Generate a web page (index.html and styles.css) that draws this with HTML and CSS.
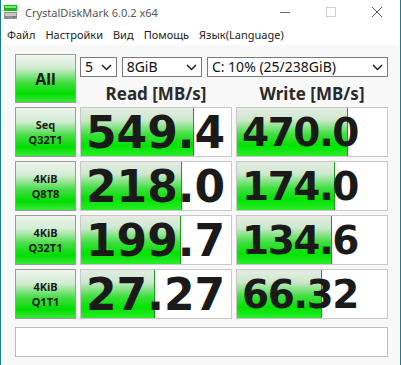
FILE: index.html
```html
<!DOCTYPE html>
<html lang="ru">
<head>
    <meta charset="UTF-8">
    <meta name="viewport" content="width=device-width, initial-scale=1.0">
    <title>CrystalDiskMark 6.0.2 x64</title>
    <link rel="stylesheet" href="styles.css">
</head>
<body>
<div class="window">
    <!-- Title bar -->
    <div class="titlebar">
        <svg class="app-icon" width="16" height="16" viewBox="0 0 16 16">
            <rect x="1" y="1" width="13" height="6" fill="#18b818"/>
            <rect x="2" y="2" width="11" height="2" fill="#7de87d"/>
            <rect x="1" y="8" width="13" height="7" fill="#8e8e8e"/>
            <rect x="2" y="9" width="11" height="3" fill="#c9c9c9"/>
            <rect x="10" y="12" width="2" height="1" fill="#2a8a2a"/>
        </svg>
        <span class="title">CrystalDiskMark 6.0.2 x64</span>
        <div class="controls">
            <span class="ctl"><svg width="10" height="10" viewBox="0 0 10 10"><path d="M0 5.5H10" stroke="#6a6a6a" stroke-width="1"/></svg></span>
            <span class="ctl"><svg width="10" height="10" viewBox="0 0 10 10"><rect x="0.5" y="0.5" width="9" height="9" fill="none" stroke="#cfcfcf"/></svg></span>
            <span class="ctl"><svg width="10" height="10" viewBox="0 0 10 10"><path d="M0 0L10 10M10 0L0 10" stroke="#555" stroke-width="1"/></svg></span>
        </div>
    </div>

    <!-- Menu -->
    <div class="menubar">
        <span>Файл</span>
        <span>Настройки</span>
        <span>Вид</span>
        <span>Помощь</span>
        <span>Язык(Language)</span>
    </div>

    <div class="client">
        <div class="board">
            <button class="btn all">All</button>

            <div class="top">
                <div class="selects">
                    <div class="select s-count">5<svg class="chev" width="11" height="7" viewBox="0 0 11 7"><path d="M1 1L5.5 5.5L10 1" fill="none" stroke="#222" stroke-width="1.5"/></svg></div>
                    <div class="select s-size">8GiB<svg class="chev" width="11" height="7" viewBox="0 0 11 7"><path d="M1 1L5.5 5.5L10 1" fill="none" stroke="#222" stroke-width="1.5"/></svg></div>
                    <div class="select s-drive">C: 10% (25/238GiB)<svg class="chev" width="11" height="7" viewBox="0 0 11 7"><path d="M1 1L5.5 5.5L10 1" fill="none" stroke="#222" stroke-width="1.5"/></svg></div>
                </div>
                <div class="heads">
                    <div class="head">Read [MB/s]</div>
                    <div class="head">Write [MB/s]</div>
                </div>
            </div>

            <button class="btn label">Seq<br>Q32T1</button>
            <div class="cell read"><span class="fill" style="width: 112px"></span><span class="val">549.4</span></div>
            <div class="cell write"><span class="fill" style="width: 110px"></span><span class="val">470.0</span></div>

            <button class="btn label">4KiB<br>Q8T8</button>
            <div class="cell read"><span class="fill" style="width: 100px"></span><span class="val">218.0</span></div>
            <div class="cell write"><span class="fill" style="width: 97px"></span><span class="val">174.0</span></div>

            <button class="btn label">4KiB<br>Q32T1</button>
            <div class="cell read"><span class="fill" style="width: 99px"></span><span class="val">199.7</span></div>
            <div class="cell write"><span class="fill" style="width: 94px"></span><span class="val">134.6</span></div>

            <button class="btn label">4KiB<br>Q1T1</button>
            <div class="cell read"><span class="fill" style="width: 73px"></span><span class="val">27.27</span></div>
            <div class="cell write"><span class="fill" style="width: 84px"></span><span class="val">66.32</span></div>
        </div>

        <!-- Comment -->
        <div class="comment"></div>
    </div>
</div>
</body>
</html>
```

FILE: styles.css
```css
body {
    margin: 0;
    font-family: "Noto Sans", "Open Sans", sans-serif;
    background: #fff;
}

.window {
    width: 399px;
    height: 365px;
    border-left: 1px solid #1b7c8c;
    border-right: 1px solid #1b7c8c;
    background: #f8f8f8;
    overflow: hidden;
}

/* Title bar */
.titlebar {
    height: 24px;
    display: flex;
    align-items: center;
    background: #fff;
}

.app-icon {
    margin-left: 2px;
}

.title {
    margin-left: 6px;
    font-size: 11px;
    color: #555;
}

.controls {
    margin-left: auto;
    display: flex;
    height: 100%;
}

.ctl {
    width: 46px;
    display: flex;
    align-items: center;
    justify-content: center;
}

/* Menu */
.menubar {
    height: 21px;
    display: flex;
    align-items: center;
    gap: 10px;
    padding-left: 6px;
    font-size: 11px;
    color: #222;
    background: #fff;
}

/* Main area */
.client {
    padding: 9px 0 0 14px;
}

.board {
    display: grid;
    grid-template-columns: 61px 152px 152px;
    grid-template-rows: 49px repeat(4, 50px);
    gap: 4px;
}

.btn {
    margin: 0;
    padding: 0;
    border: 1px solid #9c9c9c;
    font-family: "Noto Sans", sans-serif;
    font-weight: bold;
    color: #1c1c1c;
    background: linear-gradient(#eef5ee 0%, #d2ecd2 28%, #44dd44 58%, #00dc00 82%, #3bea3b 100%);
    cursor: pointer;
}

.all {
    font-size: 16px;
}

.label {
    font-size: 11px;
    line-height: 15px;
}

.top {
    grid-column: 2 / 4;
    display: flex;
    flex-direction: column;
}

.selects {
    display: flex;
    gap: 5px;
    margin-top: 3px;
}

.select {
    position: relative;
    height: 18px;
    border: 1px solid #7a7a7a;
    background: #fff;
    font-size: 14px;
    line-height: 18px;
    padding-left: 4px;
    color: #111;
}

.s-count { width: 31px; }
.s-size { width: 75px; }
.s-drive { width: 177px; }

.chev {
    position: absolute;
    right: 4px;
    top: 6px;
}

.heads {
    display: grid;
    grid-template-columns: 152px 152px;
    gap: 4px;
    margin-top: 6px;
}

.head {
    text-align: center;
    font-size: 17px;
    font-weight: bold;
    line-height: 22px;
    color: #2a2a2a;
}

.cell {
    position: relative;
    display: flex;
    align-items: center;
    border: 1px solid #c8c8c8;
    background: #fff;
    overflow: hidden;
}

.fill {
    position: absolute;
    left: 0;
    top: 0;
    bottom: 0;
    border-right: 1px solid #1e9a1e;
    background: linear-gradient(#e4ece4 0%, #cde8cd 25%, #3fdf3f 55%, #00e400 78%, #2aec2a 100%);
}

.val {
    position: relative;
    padding-left: 5px;
    font-family: "DejaVu Sans", sans-serif;
    font-weight: bold;
    color: #1a1a1a;
}

.read .val {
    font-size: 44px;
}

.write .val {
    font-size: 39px;
    letter-spacing: -1.5px;
}

.comment {
    width: 371px;
    height: 28px;
    margin-top: 8px;
    border: 1px solid #bcbcbc;
    background: #fff;
}
```
